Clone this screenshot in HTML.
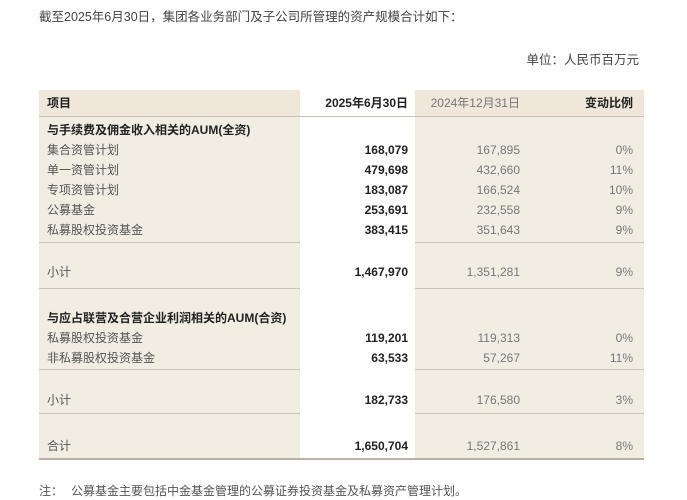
<!DOCTYPE html>
<html><head><meta charset="utf-8"><style>
body{margin:0;width:687px;height:500px;background:#fff;position:relative;overflow:hidden;font-family:"Liberation Sans","Noto Sans CJK SC",sans-serif;color:#333;}
.a{position:absolute;white-space:nowrap;font-size:12px;line-height:14px;}
.bg{position:absolute;left:39px;width:605px;background:#f2ede3;}
.w{position:absolute;left:300px;width:115px;background:#fff;}
.ln{position:absolute;left:39px;width:605px;height:1px;background:#c9c3b8;}
.l{left:47px}
.c1{right:279px;font-weight:bold;color:#222}
.c2{right:167px;color:#777}
.c3{right:54px;color:#777}
.b{font-weight:bold;color:#222}
.g{color:#555}
</style></head><body>
<div class="a" style="left:39px;top:10px;font-size:12.5px;color:#444">截至2025年6月30日，集团各业务部门及子公司所管理的资产规模合计如下：</div>
<div class="a" style="right:48px;top:53px;font-size:12.5px;color:#444">单位：人民币百万元</div>
<div class="bg" style="top:90px;height:368px"></div>
<div class="bg" style="top:90px;height:26px;background:#eee7da"></div>
<div class="ln" style="top:242px"></div>
<div class="ln" style="top:288px"></div>
<div class="ln" style="top:369px"></div>
<div class="ln" style="top:413px"></div>
<div class="w" style="top:89px;height:369px"></div>
<div class="ln" style="top:116px"></div>
<div class="ln" style="top:458px;height:2px;background:#b8b2a6"></div>
<div class="a l b" style="top:96px">项目</div>
<div class="a c1" style="top:96px">2025年6月30日</div>
<div class="a c2" style="top:96px">2024年12月31日</div>
<div class="a c3 b" style="top:96px">变动比例</div>
<div class="a l b" style="top:123px">与手续费及佣金收入相关的AUM(全资)</div>
<div class="a l g" style="top:143px">集合资管计划</div><div class="a c1" style="top:143px">168,079</div><div class="a c2" style="top:143px">167,895</div><div class="a c3" style="top:143px">0%</div>
<div class="a l g" style="top:163px">单一资管计划</div><div class="a c1" style="top:163px">479,698</div><div class="a c2" style="top:163px">432,660</div><div class="a c3" style="top:163px">11%</div>
<div class="a l g" style="top:183px">专项资管计划</div><div class="a c1" style="top:183px">183,087</div><div class="a c2" style="top:183px">166,524</div><div class="a c3" style="top:183px">10%</div>
<div class="a l g" style="top:203px">公募基金</div><div class="a c1" style="top:203px">253,691</div><div class="a c2" style="top:203px">232,558</div><div class="a c3" style="top:203px">9%</div>
<div class="a l g" style="top:223px">私募股权投资基金</div><div class="a c1" style="top:223px">383,415</div><div class="a c2" style="top:223px">351,643</div><div class="a c3" style="top:223px">9%</div>
<div class="a l g" style="top:265px">小计</div><div class="a c1" style="top:265px">1,467,970</div><div class="a c2" style="top:265px">1,351,281</div><div class="a c3" style="top:265px">9%</div>
<div class="a l b" style="top:311px">与应占联营及合营企业利润相关的AUM(合资)</div>
<div class="a l g" style="top:331px">私募股权投资基金</div><div class="a c1" style="top:331px">119,201</div><div class="a c2" style="top:331px">119,313</div><div class="a c3" style="top:331px">0%</div>
<div class="a l g" style="top:351px">非私募股权投资基金</div><div class="a c1" style="top:351px">63,533</div><div class="a c2" style="top:351px">57,267</div><div class="a c3" style="top:351px">11%</div>
<div class="a l g" style="top:393px">小计</div><div class="a c1" style="top:393px">182,733</div><div class="a c2" style="top:393px">176,580</div><div class="a c3" style="top:393px">3%</div>
<div class="a l g" style="top:439px">合计</div><div class="a c1" style="top:439px">1,650,704</div><div class="a c2" style="top:439px">1,527,861</div><div class="a c3" style="top:439px">8%</div>
<div class="a" style="left:39px;top:484px;color:#555">注：</div>
<div class="a" style="left:71px;top:484px;color:#555">公募基金主要包括中金基金管理的公募证券投资基金及私募资产管理计划。</div>
</body></html>
